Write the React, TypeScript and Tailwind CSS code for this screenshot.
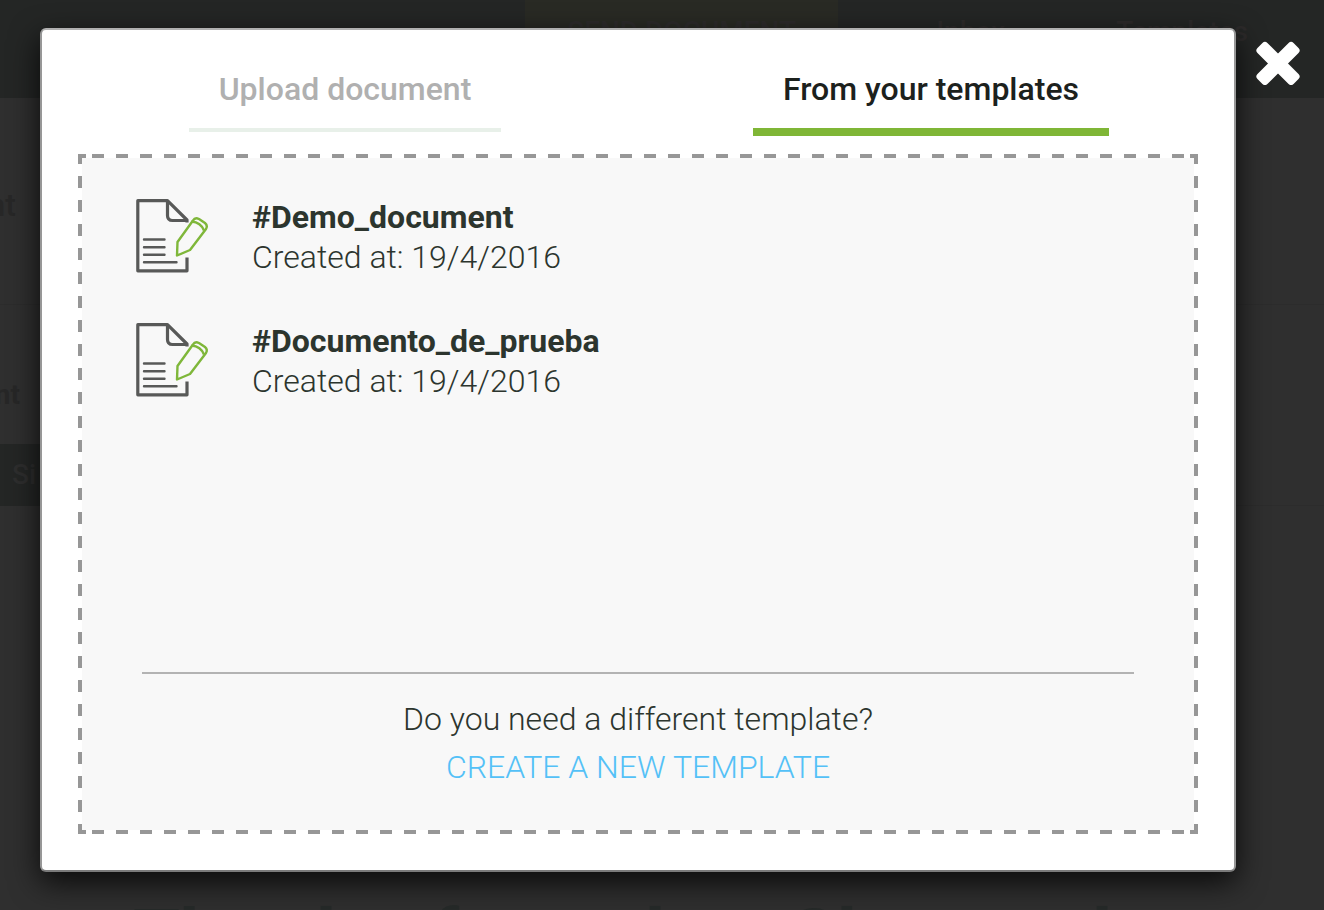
import React, { useState } from "react";

const templates = [
  { name: "#Demo_document", created: "19/4/2016" },
  { name: "#Documento_de_prueba", created: "19/4/2016" },
];

function DocumentIcon() {
  return (
    <svg viewBox="0 0 76 76" className="h-19 w-19 shrink-0" fill="none" aria-hidden="true">
      <g stroke="#585958" strokeWidth="3.2">
        <path d="M53 24.5V22L33.500 2.700H3.800V72.800H53V59.500" strokeLinejoin="round" />
        <path d="M33.500 3V17.500Q33.500 22.500 38.500 22.500H54" />
        <path d="M10 41.500H30.500M10 49.200H30.500M10 56.800H30.500M10 64.300H42.500" strokeWidth="2.400" strokeLinecap="round" />
      </g>
      <g stroke="#7fb73a" strokeWidth="2.400" strokeLinejoin="round">
        <path d="M59 22.500Q61 19 65 21L71 25Q74 27.500 72 31L56 52L43 57.500L43.500 44Z" />
        <path d="M57.500 23.500Q67 24.500 70 32.500" />
      </g>
    </svg>
  );
}

function Backdrop() {
  return (
    <div aria-hidden="true" className="absolute inset-0 overflow-hidden bg-[#2f2f2f] text-[#272727]">
      <div className="flex h-[98px] justify-end bg-[#242625] pr-[76px] text-[28px] leading-[64px] font-medium text-[#2d2b2b]">
        <div className="mr-[98px] w-[313px] bg-[#292a24] text-center">SEND DOCUMENT</div>
        <div className="mr-[98px] w-[82px]">Inbox</div>
        <div>Templates</div>
      </div>
      <div className="h-[207px] border-b border-[#2c2c2c] pt-[87px] text-[32px] leading-10 font-medium">
        <div className="flex w-4 justify-end">nt</div>
      </div>
      <div className="h-[139px] pt-[70px] text-[28px] leading-10 font-bold">
        <div className="flex w-5 justify-end">nt</div>
      </div>
      <div className="h-[62px] border-b border-[#2c2c2c]">
        <div className="h-[62px] w-1/2 bg-[#242625] pl-3 text-[28px] leading-[62px] font-medium text-[#2e2e2e]">Si</div>
      </div>
      <div className="mt-[393px] flex pl-[133px] text-[76px] leading-[76px] font-bold text-[#262a29]">
        <span className="w-[183px]">Th</span>
        <span className="w-[116px]">l</span>
        <span className="w-[213px]">f</span>
        <span className="w-[145px]">l</span>
        <span className="w-[302px]">Sl</span>
        <span>l</span>
      </div>
    </div>
  );
}

export default function App() {
  const [tab, setTab] = useState("templates");
  return (
    <div className="relative flex min-h-screen items-start pt-7 pb-[38px] pl-10 font-[Roboto,sans-serif] text-[32px] text-[#2c352e]">
      <Backdrop />
      <main
        role="dialog"
        aria-label="Choose a document"
        className="relative flex min-h-[844px] min-w-0 flex-1 flex-col rounded-md border-2 border-[#979797] border-t-[#b0b0b0] border-b-[#7b7b7b] bg-white px-9 pt-9 pb-9 shadow-[0_10px_30px_rgba(0,0,0,0.8)]"
      >
        <div role="tablist" className="flex h-[88px] items-start">
          <div className="flex flex-1 justify-center pr-7 pl-4">
            <button
              role="tab"
              aria-selected={tab === "upload"}
              onClick={() => setTab("upload")}
              className="border-b-4 border-[#e8f0e9] px-[30px] pt-0.5 pb-[18px] leading-[42px] font-medium text-[#b0b0b0]"
            >
              Upload document
            </button>
          </div>
          <div className="flex flex-1 justify-center pr-4 pl-14">
            <button
              role="tab"
              aria-selected={tab === "templates"}
              onClick={() => setTab("templates")}
              className="border-b-8 border-[#7fb636] px-[30px] pt-0.5 pb-[18px] leading-[42px] font-medium text-[#1c211d]"
            >
              From your templates
            </button>
          </div>
        </div>
        <section className="flex flex-1 flex-col p-1 [background-image:linear-gradient(#979797,#979797),linear-gradient(#979797,#979797),linear-gradient(#979797,#979797),linear-gradient(#979797,#979797),linear-gradient(90deg,#979797_6px,transparent_6px,transparent_18px,#979797_18px),linear-gradient(90deg,#979797_6px,transparent_6px,transparent_18px,#979797_18px),linear-gradient(transparent_6px,#979797_6px,#979797_18px,transparent_18px),linear-gradient(transparent_6px,#979797_6px,#979797_18px,transparent_18px)] [background-position:left_top,right_top,left_bottom,right_bottom,center_top,center_bottom,left_center,right_center] [background-repeat:no-repeat,no-repeat,no-repeat,no-repeat,repeat-x,repeat-x,repeat-y,repeat-y] [background-size:8px_4px,8px_4px,8px_4px,8px_4px,24px_4px,24px_4px,4px_24px,4px_24px]">
          <div className="flex flex-1 flex-col bg-[#f8f8f8] px-[52px] pt-[39px]">
            <ul className="flex flex-1 flex-col gap-11">
              {templates.map((t) => (
                <li key={t.name} className="flex items-start gap-[42px]">
                  <div className="pt-px">
                    <DocumentIcon />
                  </div>
                  <div className="leading-10">
                    <h2 className="font-bold">{t.name}</h2>
                    <p className="font-light">Created at: {t.created}</p>
                  </div>
                </li>
              ))}
            </ul>
            <footer className="mx-2 flex flex-col items-center border-t-2 border-[#b3b3b3] pt-[21px] pb-[39px] leading-12 font-light">
              <p>Do you need a different template?</p>
              <a href="#new-template" className="text-[#54c1f7]">CREATE A NEW TEMPLATE</a>
            </footer>
          </div>
        </section>
      </main>
      <button aria-label="Close" className="relative flex w-[88px] justify-center pt-[13px] pr-1">
        <svg viewBox="0 0 44 44" className="h-11 w-11" aria-hidden="true">
          <g fill="white" transform="rotate(45 22 22.500)">
            <rect x="-3.500" y="15.500" width="51" height="14" rx="3.500" />
            <rect x="15" y="-3" width="14" height="51" rx="3.500" />
          </g>
        </svg>
      </button>
    </div>
  );
}
